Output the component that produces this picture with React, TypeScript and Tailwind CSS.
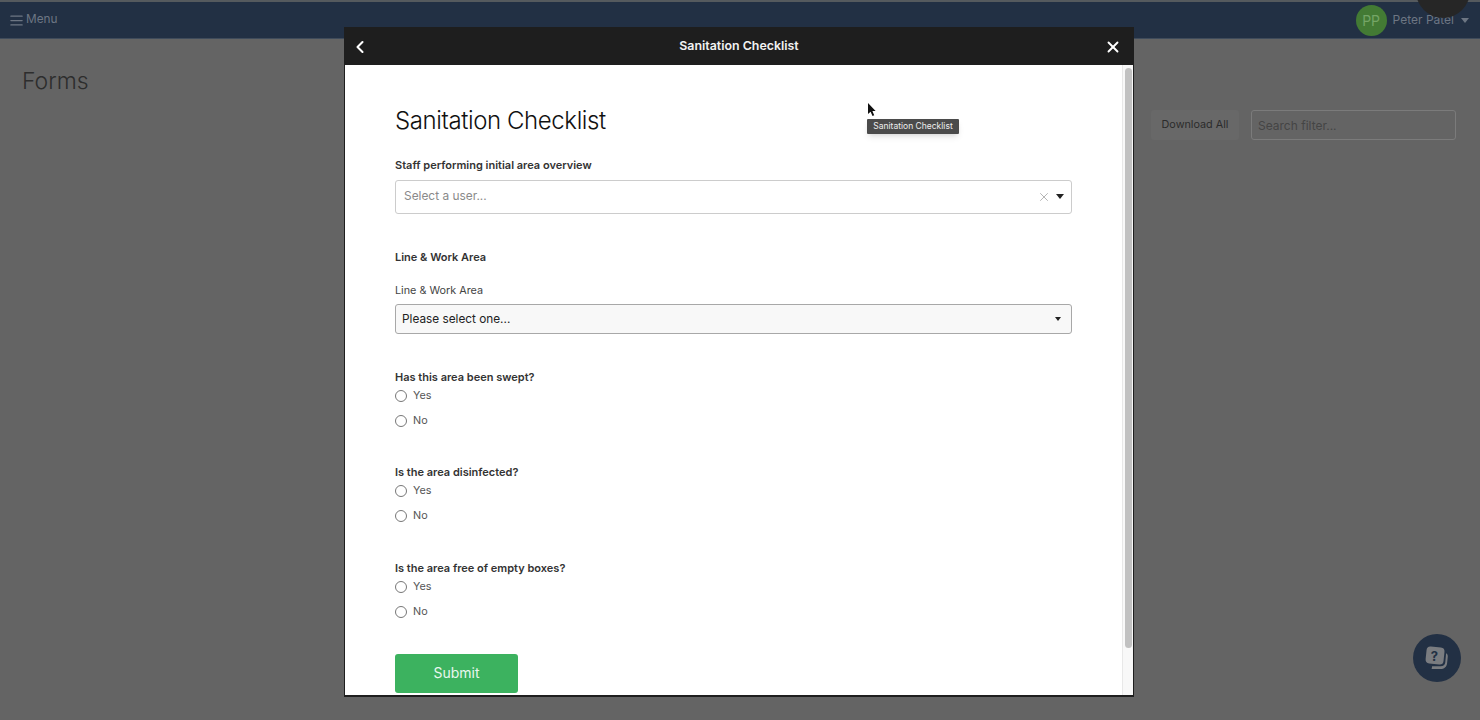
import React from 'react';
import { AlignJustify, ChevronLeft, X } from 'lucide-react';

// Один вопрос с вариантами Yes / No
function RadioQuestion({ label, className }: { label: string; className?: string }) {
  return (
    <div className={className}>
      <div className="text-[11px] leading-[16px] font-semibold text-[#333333]">{label}</div>
      <div className="mt-[3px] flex flex-col gap-[9px]">
        {['Yes', 'No'].map((option) => (
          <label key={option} className="flex h-[16px] items-center gap-[6px]">
            <span className="h-[12px] w-[12px] rounded-full border border-[#777777] bg-white"></span>
            <span className="text-[10.8px] text-[#555555]">{option}</span>
          </label>
        ))}
      </div>
    </div>
  );
}

function Caret({ className }: { className?: string }) {
  return (
    <svg width="8" height="5" viewBox="0 0 8 5" className={className}>
      <path d="M0 0h8L4 5z" fill="currentColor" />
    </svg>
  );
}

export default function App() {
  return (
    <div className="relative h-[720px] w-[1480px] overflow-hidden bg-[#646464] font-['Inter',sans-serif]">
      {/* Шапка */}
      <div className="h-[2px] bg-[#555a5e]"></div>
      <header className="flex h-[37px] items-center justify-between border-b border-[#3f4b5b] bg-[#223044] pl-[9px] pr-[11px]">
        <div className="flex items-center gap-[2px] text-[11.8px] text-[#6d7683]">
          <AlignJustify size={15} strokeWidth={2} />
          <span>Menu</span>
        </div>
        <div className="flex items-center text-[12px] text-[#6d7683]">
          <span className="flex h-[31px] w-[31px] items-center justify-center rounded-full bg-[#437a34] text-[14px] text-[#75a566]">PP</span>
          <span className="ml-[6px]">Peter Patel</span>
          <Caret className="ml-[7px] text-[#6d7683]" />
        </div>
      </header>

      {/* Страница под затемнением */}
      <main className="pl-[22px] pr-[24px]">
        <h1 className="mt-[26px] text-[23px] leading-[32px] font-light text-[#2d2d2d]">Forms</h1>
        <div className="mt-[13px] flex items-center justify-end gap-[12px]">
          <button className="h-[30px] w-[88px] rounded-[3px] bg-[#686868] pt-px text-[10.8px] text-[#2b2b2b]">Download All</button>
          <div className="flex h-[30px] w-[205px] items-center rounded-[3px] border border-[#7b7b7b] px-[6px] pt-px text-[12px] text-[#454545]">
            Search filter...
          </div>
        </div>
      </main>

      {/* Чёрный круг сверху справа */}
      <div className="absolute -top-[36px] right-[10px] h-[54px] w-[54px] rounded-full bg-[#262626]"></div>

      {/* Кнопка помощи */}
      <button className="absolute left-[1413px] top-[634px] flex h-[48px] w-[48px] items-center justify-center rounded-full bg-[#223044]">
        <svg width="28" height="28" viewBox="0 0 28 28">
          <path d="M8.5 25h9c3.6 0 6.2-2.2 6.6-5.8l.7-6.8c.1-1.3-.6-2.6-1.7-3.2l-.8 9c-.3 2.7-2 4-4.6 4h-8.6c-.2 1.4-.4 2.8-.6 2.8z" fill="#7a7c80" />
          <rect x="3" y="3" width="18" height="17" rx="4" transform="rotate(6 12 12)" fill="#7a7c80" />
          <text x="11.5" y="16.5" textAnchor="middle" fontSize="13" fontWeight="700" fill="#223044" fontFamily="Inter, sans-serif">?</text>
        </svg>
      </button>

      {/* Модальное окно */}
      <div className="absolute left-[344px] top-[27px] flex h-[670px] w-[790px] flex-col border-x border-b-2 border-[#1e1e1e] bg-white">
        <div className="relative flex h-[38px] shrink-0 items-center justify-center bg-[#1e1e1e] pt-px text-[12.4px] font-semibold text-[#f2f2f2]">
          <ChevronLeft size={20} strokeWidth={2.5} className="absolute left-[5px] text-white" />
          Sanitation Checklist
          <X size={18} strokeWidth={2.5} className="absolute right-[11px] text-white" />
        </div>

        <div className="flex min-h-0 flex-1">
          <div className="min-w-0 flex-1 overflow-hidden px-[50px]">
            <h2 className="mt-[38px] text-[24px] leading-[36px] font-light tracking-[-0.4px] text-[#111111]">Sanitation Checklist</h2>
            <div className="mt-[18px] text-[11px] leading-[16px] font-semibold text-[#333333]">Staff performing initial area overview</div>
            <div className="mt-[7px] flex h-[34px] items-center rounded-[3px] border border-[#cccccc] pb-[2px] pl-[8px] pr-[7px] text-[11.9px] text-[#8a8a8a]">
              <span className="flex-1">Select a user...</span>
              <X size={14} strokeWidth={1.5} className="mt-[2px] text-[#aaaaaa]" />
              <Caret className="ml-[5px] text-[#222222]" />
            </div>

            <div className="mt-[35px] text-[11px] leading-[16px] font-semibold text-[#333333]">Line &amp; Work Area</div>
            <div className="mt-[18px] text-[10.8px] leading-[16px] text-[#444444]">Line &amp; Work Area</div>
            <div className="mt-[5px] flex h-[30px] items-center justify-between rounded-[3px] border border-[#a8a8a8] bg-[#f8f8f8] pl-[6px] pr-[10px] text-[11.8px] text-[#222222]">
              <span className="pt-px">Please select one...</span>
              <svg width="6" height="4" viewBox="0 0 6 4" className="text-[#222222]">
                <path d="M0 0h6L3 4z" fill="currentColor" />
              </svg>
            </div>

            <RadioQuestion label="Has this area been swept?" className="mt-[35px]" />
            <RadioQuestion label="Is the area disinfected?" className="mt-[35px]" />
            <RadioQuestion label="Is the area free of empty boxes?" className="mt-[36px]" />

            <button className="mt-[34px] h-[39px] w-[123px] rounded-[3px] bg-[#3cb25f] pb-[2px] text-[14px] text-[#e9f7ee]">Submit</button>
          </div>

          {/* Полоса прокрутки */}
          <div className="w-[11px] shrink-0 border-l border-[#e8e8e8] bg-[#f8f8f8] pl-[2px] pt-[3px]">
            <div className="h-[580px] w-[7px] rounded-full bg-[#c1c1c1]"></div>
          </div>
        </div>
      </div>

      {/* Подсказка и курсор */}
      <div className="absolute left-[867px] top-[119px] flex h-[15px] w-[92px] items-center justify-center rounded-[1px] bg-[#4b4b4b] text-[8.5px] text-[#eeeeee] shadow-md">
        Sanitation Checklist
      </div>
      <svg width="9" height="14" viewBox="0 0 9 14" className="absolute left-[867px] top-[103px]">
        <path d="M1 0v11l2.6-2.3L5.5 13l1.7-.8-1.8-4.1L8.6 8z" fill="#111111" />
      </svg>
    </div>
  );
}
